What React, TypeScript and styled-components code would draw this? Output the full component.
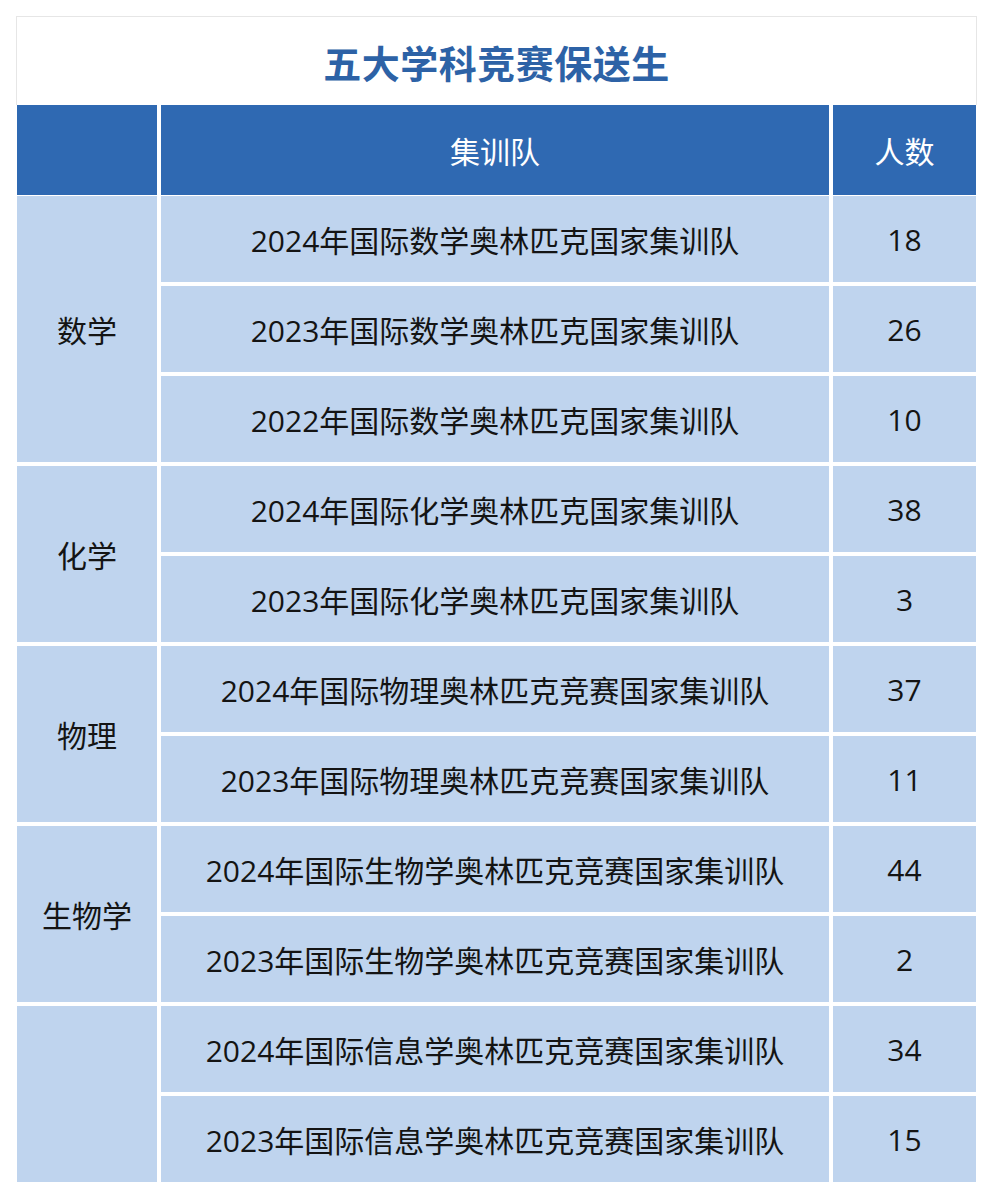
import React from 'react'
import styled, { createGlobalStyle } from 'styled-components'

const GlobalStyle = createGlobalStyle`
  body {
    margin: 0;
    background: #ffffff;
    font-family: "Open Sans", "Noto Sans CJK SC", sans-serif;
  }
`

const Page = styled.div`
  width: 961px;
  margin: 16px 0 0 16px;
`

const TitleBar = styled.div`
  height: 88px;
  border: 1px solid #e6e6e6;
  border-bottom: none;
  display: flex;
  align-items: center;
  justify-content: center;
  font-family: "Noto Sans CJK SC", sans-serif;
  font-size: 38px;
  font-weight: 700;
  color: #2d62a6;
  letter-spacing: 0.5px;
`

const Columns = `
  display: grid;
  grid-template-columns: 140px 668px 1fr;
  column-gap: 4px;
  padding: 0 1px;
`

const HeaderRow = styled.div`
  ${Columns}
  height: 90px;
`

const HeadCell = styled.div`
  background: #2f69b2;
  color: #ffffff;
  font-size: 30px;
  display: flex;
  align-items: center;
  justify-content: center;
`

const Body = styled.div`
  ${Columns}
  margin-top: 1px;
  grid-auto-rows: 86.4px;
  row-gap: 3.6px;
`

const Cell = styled.div<{ $col: number; $span?: number }>`
  grid-column: ${(p) => p.$col};
  grid-row: span ${(p) => p.$span ?? 1};
  background: #bfd4ee;
  color: #141414;
  font-size: 30px;
  display: flex;
  align-items: center;
  justify-content: center;
  white-space: nowrap;
`

type Group = { subject: string; teams: [string, number][] }

const groups: Group[] = [
  {
    subject: '数学',
    teams: [
      ['2024年国际数学奥林匹克国家集训队', 18],
      ['2023年国际数学奥林匹克国家集训队', 26],
      ['2022年国际数学奥林匹克国家集训队', 10],
    ],
  },
  {
    subject: '化学',
    teams: [
      ['2024年国际化学奥林匹克国家集训队', 38],
      ['2023年国际化学奥林匹克国家集训队', 3],
    ],
  },
  {
    subject: '物理',
    teams: [
      ['2024年国际物理奥林匹克竞赛国家集训队', 37],
      ['2023年国际物理奥林匹克竞赛国家集训队', 11],
    ],
  },
  {
    subject: '生物学',
    teams: [
      ['2024年国际生物学奥林匹克竞赛国家集训队', 44],
      ['2023年国际生物学奥林匹克竞赛国家集训队', 2],
    ],
  },
  {
    subject: '',
    teams: [
      ['2024年国际信息学奥林匹克竞赛国家集训队', 34],
      ['2023年国际信息学奥林匹克竞赛国家集训队', 15],
    ],
  },
]

export default function App() {
  return (
    <Page>
      <GlobalStyle />
      <TitleBar>五大学科竞赛保送生</TitleBar>
      <HeaderRow>
        <HeadCell />
        <HeadCell>集训队</HeadCell>
        <HeadCell>人数</HeadCell>
      </HeaderRow>
      <Body>
        {groups.map((g, gi) => (
          <React.Fragment key={gi}>
            <Cell $col={1} $span={g.teams.length}>
              {g.subject}
            </Cell>
            {g.teams.map(([name, count]) => (
              <React.Fragment key={name}>
                <Cell $col={2}>{name}</Cell>
                <Cell $col={3}>{count}</Cell>
              </React.Fragment>
            ))}
          </React.Fragment>
        ))}
      </Body>
    </Page>
  )
}
